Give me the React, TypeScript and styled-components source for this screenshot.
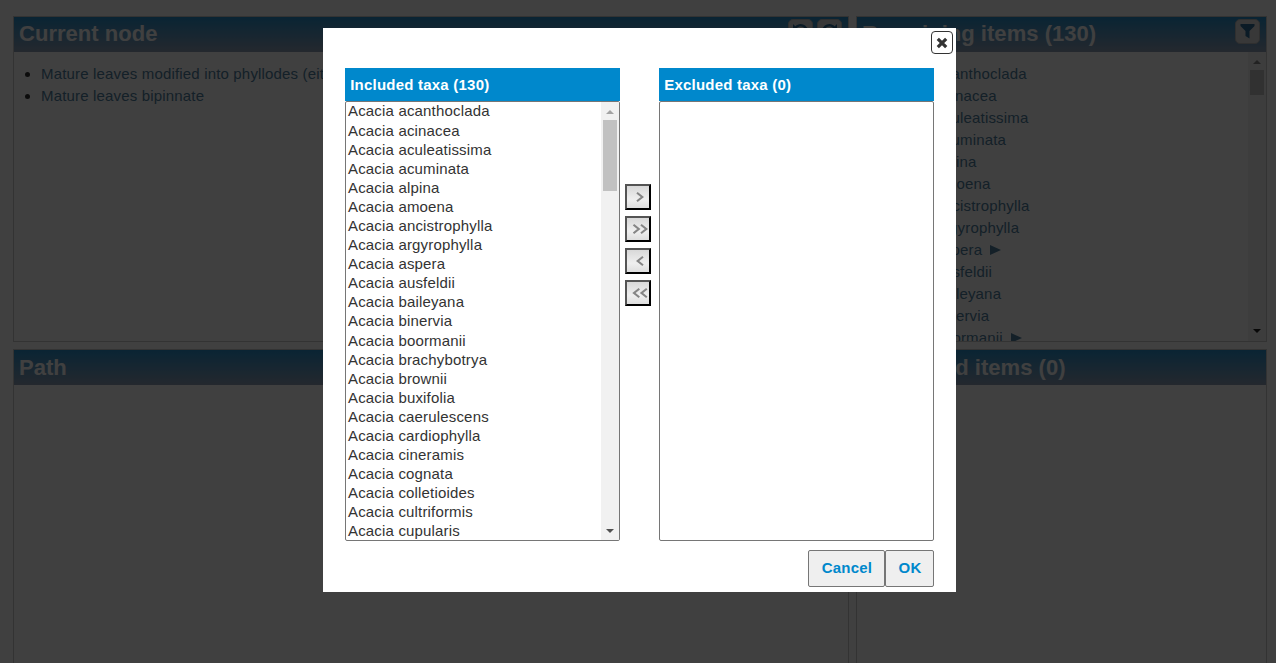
import React from "react";
import styled, { createGlobalStyle } from "styled-components";

const Global = createGlobalStyle`
  * { box-sizing: border-box; }
  html, body { margin: 0; height: 663px; overflow: hidden; background: #fff; }
  body { font: 15px/22px "Liberation Sans", Arial, sans-serif; color: #333; letter-spacing: 0.17px; }
  ul { margin: 0; padding: 0; list-style: none; }
`;

const Page = styled.div`
  position: relative;
  width: 1276px;
  height: 663px;
  overflow: hidden;
`;

const Grid = styled.div`
  display: grid;
  grid-template-columns: 836px 411px;
  grid-template-rows: 326px 326px;
  column-gap: 7px;
  row-gap: 7px;
  padding: 16px 0 0 13px;
`;

const Panel = styled.section`
  display: flex;
  flex-direction: column;
  border: 1px solid #ccc;
  overflow: hidden;
  min-width: 0;
`;

const PanelHead = styled.header`
  display: flex;
  flex: none;
  align-items: flex-start;
  justify-content: space-between;
  height: 35px;
  padding: 0 6px 0 5px;
  background: linear-gradient(#2890cc, #90a0b8);
`;

const PanelTitle = styled.h2<{ $lower?: boolean }>`
  margin: 0;
  font-size: 22px;
  line-height: ${(p) => (p.$lower ? 36 : 34)}px;
  letter-spacing: 0.03px;
  color: #fff;
  white-space: nowrap;
`;

const Tools = styled.div`
  display: flex;
  gap: 4px;
  padding-top: 2px;
`;

const Tool = styled.button`
  display: flex;
  align-items: center;
  justify-content: center;
  width: 25px;
  height: 25px;
  padding: 0 0 1px;
  border: 1px solid #bbb;
  border-radius: 5px;
  background: #ddd;
  color: #2c6e98;
`;

const PanelBody = styled.div`
  display: flex;
  flex: 1;
  min-height: 0;
`;

const Features = styled.ul`
  padding: 11px 0 0 27px;
  white-space: nowrap;
  color: #5080a0;
`;

const Feature = styled.li`
  position: relative;
  height: 22px;
  font-size: 15px;
  &::before {
    content: "";
    position: absolute;
    left: -16px;
    top: 9px;
    width: 5px;
    height: 5px;
    border-radius: 50%;
    background: #333;
  }
`;

const Items = styled.ul`
  flex: 1;
  padding: 11px 0 0 28px;
  overflow: hidden;
  color: #5080a0;
`;

const Item = styled.li`
  display: flex;
  align-items: center;
  gap: 8px;
  height: 22px;
  white-space: nowrap;
`;

const Expand = styled.svg`
  width: 11px;
  height: 10px;
  fill: currentColor;
`;

const Track = styled.div<{ $pad: number; $end: number }>`
  display: flex;
  flex: none;
  flex-direction: column;
  align-items: center;
  width: 18px;
  padding: ${(p) => p.$pad}px 2px ${(p) => p.$end}px 1px;
  background: #f1f1f1;
`;

const Thumb = styled.div<{ $h: number }>`
  width: 14px;
  height: ${(p) => p.$h}px;
  margin: 6px 0 auto;
  background: #c1c1c1;
`;

const Arrow = styled.svg`
  flex: none;
  width: 8px;
  height: 4px;
`;

const Shade = styled.div`
  position: absolute;
  inset: 0;
  background: rgba(0, 0, 0, 0.75);
`;

const Dialog = styled.div`
  position: absolute;
  left: 323px;
  top: 28px;
  width: 633px;
  height: 564px;
  padding: 40px 22px 0;
  background: #fff;
`;

const Close = styled.button`
  position: absolute;
  right: 3px;
  top: 3px;
  display: flex;
  align-items: center;
  justify-content: center;
  width: 22px;
  height: 23px;
  padding: 0;
  border: 1px solid #333;
  border-radius: 4px;
  background: #fff;
`;

const Picker = styled.div`
  display: grid;
  grid-template-columns: 275px 39px 275px;
`;

const Column = styled.div`
  height: 473px;
`;

const ColumnHead = styled.h3`
  margin: 0;
  height: 33px;
  padding-left: 5.2px;
  background: #0088cc;
  color: #fff;
  font-size: 15px;
  line-height: 34px;
  letter-spacing: 0.22px;
`;

const Select = styled.div`
  display: flex;
  height: 440px;
  border: 1px solid #767676;
  border-radius: 2px;
  background: #fff;
  overflow: hidden;
`;

const Options = styled.ul`
  flex: 1;
  margin-top: -0.6px;
  padding-left: 2px;
`;

const Option = styled.li`
  height: 19.094px;
  line-height: 19px;
  font-size: 15px;
  white-space: nowrap;
`;

const Moves = styled.div`
  display: flex;
  flex-direction: column;
  gap: 6px;
  padding: 116px 0 0 5px;
`;

const Move = styled.button`
  display: flex;
  align-items: center;
  justify-content: center;
  width: 26px;
  height: 26px;
  padding: 0 0 0 3px;
  border: 2px outset #000;
  background: linear-gradient(#d8d8d8, #efefef 60%, #dedede);
`;

const Actions = styled.div`
  display: flex;
  justify-content: flex-end;
  padding-top: 9px;
`;

const Action = styled.button<{ $w: number }>`
  width: ${(p) => p.$w}px;
  height: 37px;
  padding: 0 0 3px 1px;
  border: 1px solid #767676;
  border-radius: 2px;
  background: #efefef;
  color: #0088cc;
  font: bold 15px "Liberation Sans", Arial, sans-serif;
  letter-spacing: 0.2px;
`;

const included = [
  "acanthoclada", "acinacea", "aculeatissima", "acuminata", "alpina", "amoena",
  "ancistrophylla", "argyrophylla", "aspera", "ausfeldii", "baileyana", "binervia",
  "boormanii", "brachybotrya", "brownii", "buxifolia", "caerulescens", "cardiophylla",
  "cineramis", "cognata", "colletioides", "cultriformis", "cupularis",
];
const expandable = ["aspera", "boormanii"];

type ScrollbarProps = { pad: number; end: number; thumb: number; up: string; down: string };

const Scrollbar = ({ pad, end, thumb, up, down }: ScrollbarProps) => (
  <Track $pad={pad} $end={end}>
    <Arrow viewBox="0 0 8 4"><path d="M0 4 4 0 8 4Z" fill={up} /></Arrow>
    <Thumb $h={thumb} />
    <Arrow viewBox="0 0 8 4"><path d="M0 0H8L4 4Z" fill={down} /></Arrow>
  </Track>
);

const Chevrons = ({ count, left }: { count: number; left?: boolean }) => (
  <svg width="18" height="12" viewBox="0 0 18 12" fill="none" stroke="#858585" strokeWidth="2.1">
    {count === 1
      ? <path d={left ? "M12 1.8 6.7 6 12 10.2" : "M6 1.8 11.3 6 6 10.2"} />
      : <path d={left ? "M8.3 1.8 3 6 8.3 10.2M15.8 1.8 10.5 6 15.8 10.2" : "M2.5 1.8 7.8 6 2.5 10.2M10 1.8 15.3 6 10 10.2"} />}
  </svg>
);

const Turn = ({ forward }: { forward?: boolean }) => (
  <svg width="17" height="17" viewBox="0 0 17 17" fill="none" stroke="currentColor" strokeWidth="2.4">
    <g transform={forward ? "translate(17 0) scale(-1 1)" : undefined}>
      <path d="M3 5.5A6.4 6.4 0 1 1 3.5 12.5" />
      <path d="M1 1V7H7Z" fill="currentColor" stroke="none" />
    </g>
  </svg>
);

export default function App() {
  return (
    <Page>
      <Global />
      <Grid>
        <Panel>
          <PanelHead>
            <PanelTitle>Current node</PanelTitle>
            <Tools>
              <Tool><Turn /></Tool>
              <Tool><Turn forward /></Tool>
            </Tools>
          </PanelHead>
          <PanelBody>
            <Features>
              <Feature>Mature leaves modified into phyllodes (either</Feature>
              <Feature>Mature leaves bipinnate</Feature>
            </Features>
          </PanelBody>
        </Panel>
        <Panel>
          <PanelHead>
            <PanelTitle>Remaining items (130)</PanelTitle>
            <Tools>
              <Tool>
                <svg width="15" height="15" viewBox="0 0 15 15"><path d="M.5 0H14.5V2L9.5 7V14.5L5.5 12V7L.5 2Z" fill="currentColor" /></svg>
              </Tool>
            </Tools>
          </PanelHead>
          <PanelBody>
            <Items>
              {included.slice(0, 13).map((name) => (
                <Item key={name}>
                  Acacia {name}
                  {expandable.includes(name) && <Expand viewBox="0 0 11 10"><path d="M0 0 11 5 0 10Z" /></Expand>}
                </Item>
              ))}
            </Items>
            <Scrollbar pad={8} end={8} thumb={25} up="#888" down="#222" />
          </PanelBody>
        </Panel>
        <Panel>
          <PanelHead><PanelTitle $lower>Path</PanelTitle></PanelHead>
        </Panel>
        <Panel>
          <PanelHead><PanelTitle $lower>Discarded items (0)</PanelTitle></PanelHead>
        </Panel>
      </Grid>
      <Shade />
      <Dialog>
        <Close>
          <svg width="12" height="12" viewBox="0 0 12 12" stroke="#333" strokeWidth="3.2"><path d="M1.8 1.8 10.2 10.2M10.2 1.8 1.8 10.2" /></svg>
        </Close>
        <Picker>
          <Column>
            <ColumnHead>Included taxa (130)</ColumnHead>
            <Select>
              <Options>
                {included.map((name) => <Option key={name}>Acacia {name}</Option>)}
              </Options>
              <Scrollbar pad={8} end={7} thumb={71} up="#a3a3a3" down="#505050" />
            </Select>
          </Column>
          <Moves>
            <Move><Chevrons count={1} /></Move>
            <Move><Chevrons count={2} /></Move>
            <Move><Chevrons count={1} left /></Move>
            <Move><Chevrons count={2} left /></Move>
          </Moves>
          <Column>
            <ColumnHead>Excluded taxa (0)</ColumnHead>
            <Select />
          </Column>
        </Picker>
        <Actions>
          <Action $w={77}>Cancel</Action>
          <Action $w={49}>OK</Action>
        </Actions>
      </Dialog>
    </Page>
  );
}
